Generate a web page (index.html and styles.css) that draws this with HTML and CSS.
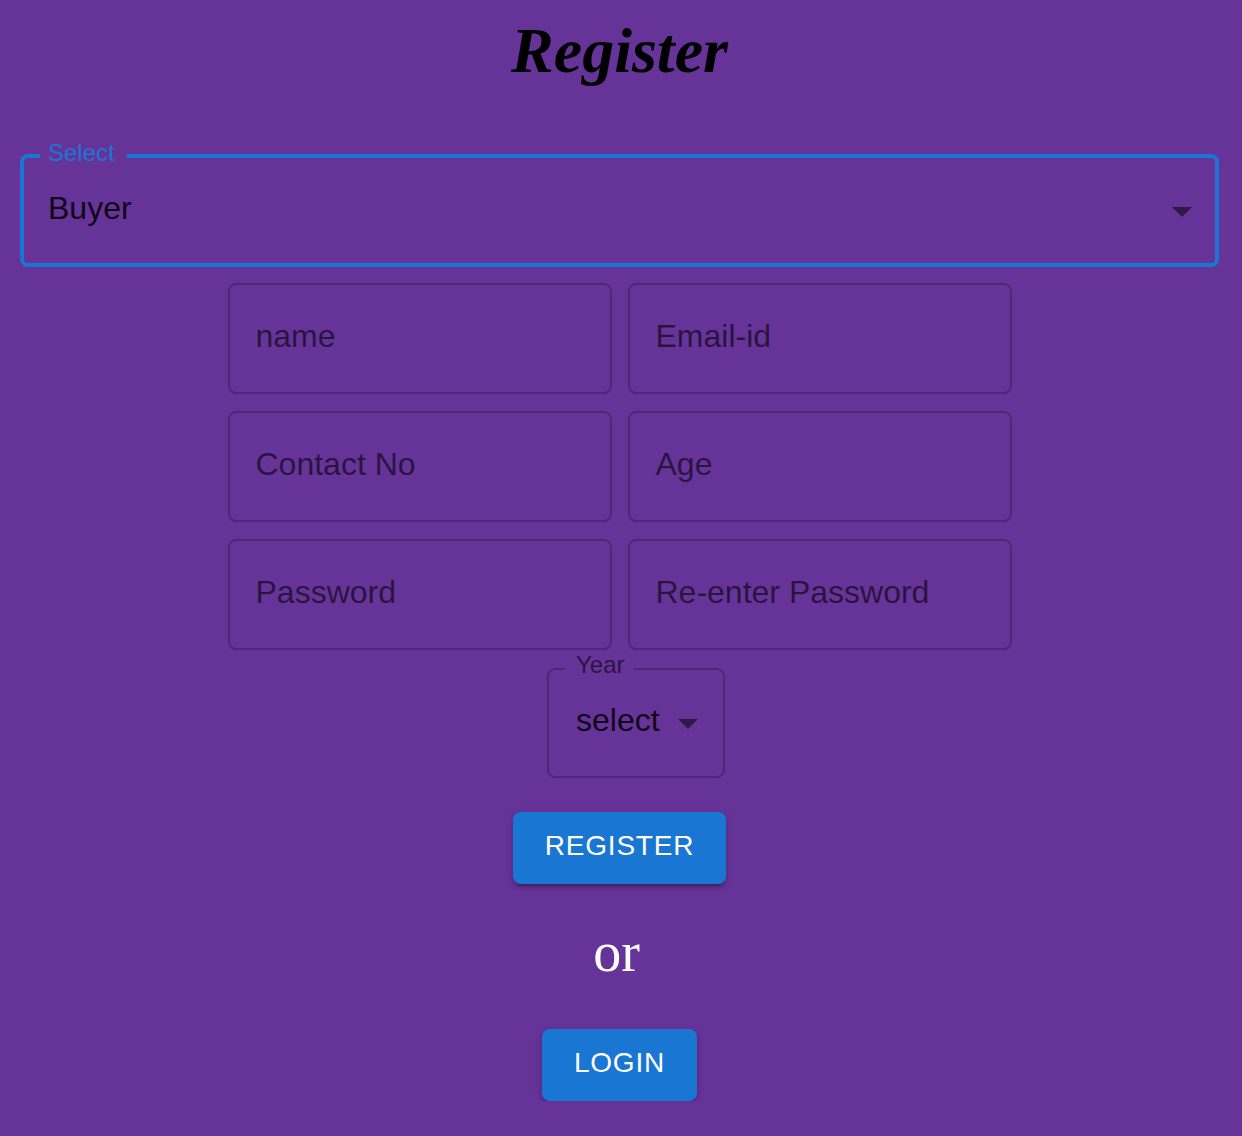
FILE: index.html
```html
<!DOCTYPE html>
<html lang="en">
<head>
<meta charset="utf-8">
<title>Register</title>
<link rel="stylesheet" href="styles.css">
</head>
<body>
<main class="page">
  <h1 class="title">Register</h1>

  <div class="role-select">
    <span class="notch-label notch-label--focused">Select</span>
    <span class="value">Buyer</span>
    <svg class="arrow" width="20" height="10" viewBox="7 10 10 5" aria-hidden="true"><path d="M7 10l5 5 5-5z"/></svg>
  </div>

  <div class="fields">
    <div class="field"><span class="field-label">name</span></div>
    <div class="field"><span class="field-label">Email-id</span></div>
    <div class="field"><span class="field-label">Contact No</span></div>
    <div class="field"><span class="field-label">Age</span></div>
    <div class="field"><span class="field-label">Password</span></div>
    <div class="field"><span class="field-label">Re-enter Password</span></div>
  </div>

  <div class="year-row">
    <div class="year-select">
      <span class="notch-label notch-label--year">Year</span>
      <span class="value">select</span>
      <svg class="arrow arrow--year" width="20" height="10" viewBox="7 10 10 5" aria-hidden="true"><path d="M7 10l5 5 5-5z"/></svg>
    </div>
  </div>

  <div class="actions">
    <button class="btn" type="button">Register</button>
    <p class="or">or</p>
    <button class="btn" type="button">Login</button>
  </div>
</main>
</body>
</html>
```
FILE: styles.css
```css
body {
  margin: 0;
  background: #663399;
  font-family: "Liberation Sans", Arial, sans-serif;
}

.page {
  margin-right: 3px;
}

.title {
  margin: 19px 0 0;
  font: italic 700 64px/64px "Liberation Serif", "Times New Roman", serif;
  text-align: center;
  color: #000;
}

.role-select {
  position: relative;
  margin: 71px 20px 0;
  height: 113px;
  box-sizing: border-box;
  border: 4px solid #1976d2;
  border-radius: 8px;
  padding: 34px 24px 0;
}

.notch-label {
  position: absolute;
  font-size: 24px;
  line-height: 24px;
  background: #663399;
  color: rgba(0, 0, 0, 0.6);
}

.notch-label--focused {
  top: -17px;
  left: 16px;
  padding: 0 12px 0 8px;
  color: #1976d2;
}

.notch-label--year {
  top: -17px;
  left: 16px;
  padding: 0 9px 0 11px;
}

.value {
  display: block;
  font-size: 32px;
  line-height: 32px;
  color: rgba(0, 0, 0, 0.87);
}

.arrow {
  position: absolute;
  right: 23px;
  top: 49px;
  fill: rgba(0, 0, 0, 0.54);
}

.fields {
  display: grid;
  grid-template-columns: 384px 384px;
  column-gap: 16px;
  row-gap: 17px;
  justify-content: center;
  margin-top: 16px;
}

.field {
  height: 111px;
  box-sizing: border-box;
  border: 2px solid rgba(0, 0, 0, 0.23);
  border-radius: 8px;
  padding: 35px 26px 0;
}

.field-label {
  display: block;
  font-size: 32px;
  line-height: 32px;
  color: rgba(0, 0, 0, 0.6);
}

.year-row {
  display: flex;
  justify-content: center;
  margin-top: 18px;
}

.year-select {
  position: relative;
  margin-left: 33px;
  width: 178px;
  height: 110px;
  box-sizing: border-box;
  border: 2px solid rgba(0, 0, 0, 0.23);
  border-radius: 8px;
  padding: 34px 27px 0;
}

.arrow--year {
  right: 25px;
  top: 49px;
}

.actions {
  display: flex;
  flex-direction: column;
  align-items: center;
  margin-top: 34px;
}

.btn {
  height: 72px;
  box-sizing: border-box;
  padding: 0 32px 5px;
  border: 0;
  border-radius: 8px;
  background: #1976d2;
  color: #fff;
  font-family: "Liberation Sans", Arial, sans-serif;
  font-size: 28px;
  line-height: 67px;
  letter-spacing: 0.8px;
  text-transform: uppercase;
  box-shadow: 0 6px 2px -4px rgba(0, 0, 0, 0.2), 0 4px 4px 0 rgba(0, 0, 0, 0.14), 0 2px 10px 0 rgba(0, 0, 0, 0.12);
  cursor: pointer;
}

.or {
  margin: 40px 0 49px;
  padding-right: 6px;
  font: 56px/56px "Liberation Serif", "Times New Roman", serif;
  color: #fff;
}
```
